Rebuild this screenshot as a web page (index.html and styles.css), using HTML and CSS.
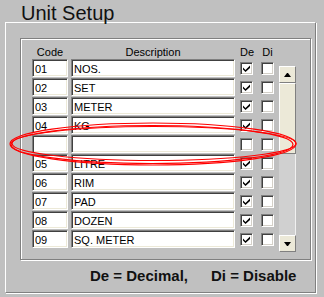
FILE: index.html
```html
<!DOCTYPE html>
<html lang="en">
<head>
    <meta charset="UTF-8">
    <title>Unit Setup</title>
    <link rel="stylesheet" href="styles.css">
</head>
<body>
    <div class="screen">
        <h1 class="title">Unit Setup</h1>
        <div class="frame">
            <div class="grid-box">
                <div class="table">
                    <div class="head">
                        <span class="col-code">Code</span>
                        <span class="col-desc">Description</span>
                        <span class="col-chk">De</span>
                        <span class="col-chk">Di</span>
                    </div>
                    <div class="rows">
                        <div class="row">
                            <input class="field col-code" type="text" value="01">
                            <input class="field col-desc" type="text" value="NOS.">
                            <span class="check col-chk"><svg viewBox="0 0 7 7" width="7" height="7"><polygon points="0,2.5 2.5,5 7,0.5 7,3 2.5,7 0,4.5"/></svg></span>
                            <span class="check col-chk"></span>
                        </div>
                        <div class="row">
                            <input class="field col-code" type="text" value="02">
                            <input class="field col-desc" type="text" value="SET">
                            <span class="check col-chk"><svg viewBox="0 0 7 7" width="7" height="7"><polygon points="0,2.5 2.5,5 7,0.5 7,3 2.5,7 0,4.5"/></svg></span>
                            <span class="check col-chk"></span>
                        </div>
                        <div class="row">
                            <input class="field col-code" type="text" value="03">
                            <input class="field col-desc" type="text" value="METER">
                            <span class="check col-chk"><svg viewBox="0 0 7 7" width="7" height="7"><polygon points="0,2.5 2.5,5 7,0.5 7,3 2.5,7 0,4.5"/></svg></span>
                            <span class="check col-chk"></span>
                        </div>
                        <div class="row">
                            <input class="field col-code" type="text" value="04">
                            <input class="field col-desc" type="text" value="KG">
                            <span class="check col-chk"><svg viewBox="0 0 7 7" width="7" height="7"><polygon points="0,2.5 2.5,5 7,0.5 7,3 2.5,7 0,4.5"/></svg></span>
                            <span class="check col-chk"></span>
                        </div>
                        <div class="row">
                            <input class="field col-code" type="text" value="">
                            <input class="field col-desc" type="text" value="">
                            <span class="check col-chk"></span>
                            <span class="check col-chk"></span>
                        </div>
                        <div class="row">
                            <input class="field col-code" type="text" value="05">
                            <input class="field col-desc" type="text" value="LITRE">
                            <span class="check col-chk"><svg viewBox="0 0 7 7" width="7" height="7"><polygon points="0,2.5 2.5,5 7,0.5 7,3 2.5,7 0,4.5"/></svg></span>
                            <span class="check col-chk"></span>
                        </div>
                        <div class="row">
                            <input class="field col-code" type="text" value="06">
                            <input class="field col-desc" type="text" value="RIM">
                            <span class="check col-chk"><svg viewBox="0 0 7 7" width="7" height="7"><polygon points="0,2.5 2.5,5 7,0.5 7,3 2.5,7 0,4.5"/></svg></span>
                            <span class="check col-chk"></span>
                        </div>
                        <div class="row">
                            <input class="field col-code" type="text" value="07">
                            <input class="field col-desc" type="text" value="PAD">
                            <span class="check col-chk"><svg viewBox="0 0 7 7" width="7" height="7"><polygon points="0,2.5 2.5,5 7,0.5 7,3 2.5,7 0,4.5"/></svg></span>
                            <span class="check col-chk"></span>
                        </div>
                        <div class="row">
                            <input class="field col-code" type="text" value="08">
                            <input class="field col-desc" type="text" value="DOZEN">
                            <span class="check col-chk"><svg viewBox="0 0 7 7" width="7" height="7"><polygon points="0,2.5 2.5,5 7,0.5 7,3 2.5,7 0,4.5"/></svg></span>
                            <span class="check col-chk"></span>
                        </div>
                        <div class="row">
                            <input class="field col-code" type="text" value="09">
                            <input class="field col-desc" type="text" value="SQ. METER">
                            <span class="check col-chk"><svg viewBox="0 0 7 7" width="7" height="7"><polygon points="0,2.5 2.5,5 7,0.5 7,3 2.5,7 0,4.5"/></svg></span>
                            <span class="check col-chk"></span>
                        </div>
                    </div>
                </div>
                <div class="scrollbar">
                    <div class="sb-btn"><span class="arrow-up"></span></div>
                    <div class="sb-thumb"></div>
                    <div class="sb-track"></div>
                    <div class="sb-btn"><span class="arrow-down"></span></div>
                </div>
            </div>
            <p class="legend"><span>De = Decimal,</span><span>Di = Disable</span></p>
        </div>

        <!-- red marker drawn over the empty row -->
        <svg class="marker" width="324" height="297" viewBox="0 0 324 297">
            <ellipse cx="153" cy="144" rx="143" ry="21"/>
            <ellipse cx="152" cy="144.5" rx="141" ry="19"/>
            <ellipse cx="154" cy="143.5" rx="142" ry="17"/>
        </svg>
    </div>
</body>
</html>
```

FILE: styles.css
```css
body {
    margin: 0;
    background: #c0c0c0;
    font-family: "Liberation Sans", Arial, sans-serif;
    color: #000;
}

.screen {
    position: relative;
    width: 324px;
    height: 297px;
    overflow: hidden;
}

.title {
    position: relative;
    z-index: 1;
    margin: 0 0 0 21px;
    padding-top: 4px;
    font-size: 20px;
    line-height: 18px;
    font-weight: normal;
    color: #111;
}

.frame {
    box-sizing: border-box;
    margin-left: 5px;
    width: 311px;
    height: 271px;
    border: 1px solid;
    border-color: #fff #808080 #808080 #fff;
    box-shadow: 1px 1px 0 #fff;
    padding: 15px 0 0 14px;
}

.grid-box {
    box-sizing: border-box;
    width: 291px;
    height: 222px;
    border: 1px solid #808080;
    box-shadow: inset 1px 1px 0 #fff, 1px 1px 0 #fff;
    display: flex;
    align-items: flex-start;
    gap: 5px;
    padding: 6px 0 0 11px;
}

.table {
    display: flex;
    flex-direction: column;
}

.head,
.row {
    display: flex;
    align-items: center;
}

.head {
    height: 14px;
    font-size: 11px;
    text-align: center;
}

.rows {
    display: flex;
    flex-direction: column;
    gap: 1px;
}

.row {
    height: 18px;
}

.col-code {
    width: 36px;
    margin-right: 3px;
}

.col-desc {
    width: 164px;
    margin-right: 5px;
}

.col-chk {
    width: 13px;
}

.col-chk + .col-chk {
    margin-left: 8px;
}

.field {
    box-sizing: border-box;
    height: 18px;
    margin-top: 0;
    margin-bottom: 0;
    margin-left: 0;
    border: 1px solid;
    border-color: #808080 #fff #fff #808080;
    box-shadow: inset 1px 1px 0 #404040, inset -1px -1px 0 #ece9d8;
    background: #fff;
    padding: 1px 0 0 2px;
    font: 11px "Liberation Sans", Arial, sans-serif;
    color: #000;
    outline: none;
}

.check {
    box-sizing: border-box;
    height: 13px;
    border: 1px solid;
    border-color: #808080 #fff #fff #808080;
    box-shadow: inset 1px 1px 0 #404040, inset -1px -1px 0 #d4d0c8;
    background: #fff;
    display: flex;
    align-items: center;
    justify-content: center;
}

.check svg {
    fill: #000;
}

.scrollbar {
    margin-top: 21px;
    width: 17px;
    height: 186px;
    display: flex;
    flex-direction: column;
    background: #d0d0d0;
}

.sb-btn,
.sb-thumb {
    box-sizing: border-box;
    background: #ece9d8;
    border: 1px solid;
    border-color: #fff #808080 #808080 #fff;
}

.sb-btn {
    height: 17px;
    display: flex;
    align-items: center;
    justify-content: center;
}

.sb-thumb {
    height: 71px;
}

.sb-track {
    flex: 1;
    border-right: 1px solid #f0f0f0;
}

.arrow-up,
.arrow-down {
    width: 1px;
    height: 0;
    border-left: 3px solid transparent;
    border-right: 3px solid transparent;
}

.arrow-up {
    border-bottom: 4px solid #000;
}

.arrow-down {
    border-top: 4px solid #000;
}

.legend {
    margin: 7px 0 0 70px;
    display: flex;
    gap: 23px;
    font-size: 15px;
    line-height: 17px;
    font-weight: bold;
    color: #111;
}

.marker {
    position: absolute;
    left: 0;
    top: 0;
    pointer-events: none;
}

.marker ellipse {
    fill: none;
    stroke: #f00;
    stroke-width: 1.2;
}
```
